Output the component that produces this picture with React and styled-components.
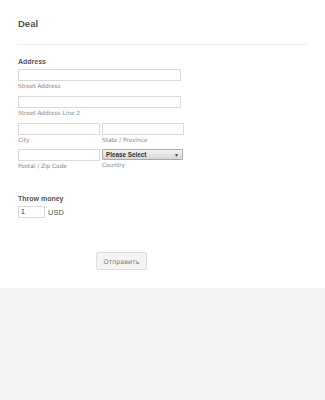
import React from "react";
import styled, { createGlobalStyle } from "styled-components";

const Global = createGlobalStyle`
  html, body { margin: 0; padding: 0; background: #f3f3f3; }
  body { font-family: "Liberation Sans", Arial, sans-serif; }
`;

const Form = styled.div`
  background: #fff;
  height: 288px;
  box-sizing: border-box;
  padding: 18px 18px 0 18px;
`;

const Header = styled.div`
  font-size: 9.5px;
  font-weight: bold;
  color: #555;
  line-height: 12px;
  padding-bottom: 14px;
  border-bottom: 1px solid #eee;
`;

const Section = styled.div`
  padding-top: ${(p) => p.$top}px;
`;

const Label = styled.div`
  font-size: 7px;
  font-weight: bold;
  color: #555;
  line-height: 9px;
  margin-bottom: 3px;
`;

const Row = styled.div`
  display: flex;
  gap: 2px;
`;

const Field = styled.div`
  display: flex;
  flex-direction: column;
  width: ${(p) => p.$w}px;
`;

const Input = styled.div`
  box-sizing: border-box;
  height: 12px;
  width: ${(p) => (p.$w ? p.$w + "px" : "100%")};
  border: 1px solid #dadada;
  background: #fff;
  font-size: 7px;
  color: #333;
  line-height: 10px;
  padding-left: 2px;
`;

const Sub = styled.div`
  font-family: "DejaVu Sans", Verdana, sans-serif;
  font-size: 5.8px;
  color: #888;
  line-height: 8px;
  margin-top: 1px;
  margin-bottom: ${(p) => p.$mb ?? 6}px;
`;

const Select = styled.div`
  box-sizing: border-box;
  height: 11px;
  width: 81px;
  border: 1px solid #aaa;
  border-radius: 1px;
  background: linear-gradient(#f4f4f4, #d6d6d6);
  font-size: 6.3px;
  font-weight: bold;
  color: #333;
  display: flex;
  align-items: center;
  justify-content: space-between;
  padding: 0 3px;
`;

const Arrow = styled.span`
  font-size: 5px;
  color: #444;
`;

const Money = styled.div`
  display: flex;
  align-items: center;
  gap: 3px;
`;

const Currency = styled.span`
  font-size: 7.5px;
  color: #555;
`;

const ButtonRow = styled.div`
  padding-top: 34px;
  padding-left: 78px;
`;

const Button = styled.div`
  box-sizing: border-box;
  width: 51px;
  height: 18px;
  border: 1px solid #ddd;
  border-radius: 2px;
  background: #f4f4f4;
  color: #777;
  font-family: "DejaVu Sans", Verdana, sans-serif;
  font-size: 6.3px;
  display: flex;
  align-items: center;
  justify-content: center;
`;

export default function App() {
  return (
    <>
      <Global />
      <Form>
        <Header>Deal</Header>
        <Section $top={12}>
          <Label>Address</Label>
          <Input $w={163} />
          <Sub>Street Address</Sub>
          <Input $w={163} />
          <Sub>Street Address Line 2</Sub>
          <Row>
            <Field $w={82}>
              <Input />
              <Sub $mb={5}>City</Sub>
            </Field>
            <Field $w={82}>
              <Input />
              <Sub $mb={5}>State / Province</Sub>
            </Field>
          </Row>
          <Row>
            <Field $w={82}>
              <Input />
              <Sub $mb={0}>Postal / Zip Code</Sub>
            </Field>
            <Field $w={82}>
              <Select>
                <span>Please Select</span>
                <Arrow>▼</Arrow>
              </Select>
              <Sub $mb={0}>Country</Sub>
            </Field>
          </Row>
        </Section>
        <Section $top={24}>
          <Label>Throw money</Label>
          <Money>
            <Input $w={27}>1</Input>
            <Currency>USD</Currency>
          </Money>
        </Section>
        <ButtonRow>
          <Button>Отправить</Button>
        </ButtonRow>
      </Form>
    </>
  );
}
